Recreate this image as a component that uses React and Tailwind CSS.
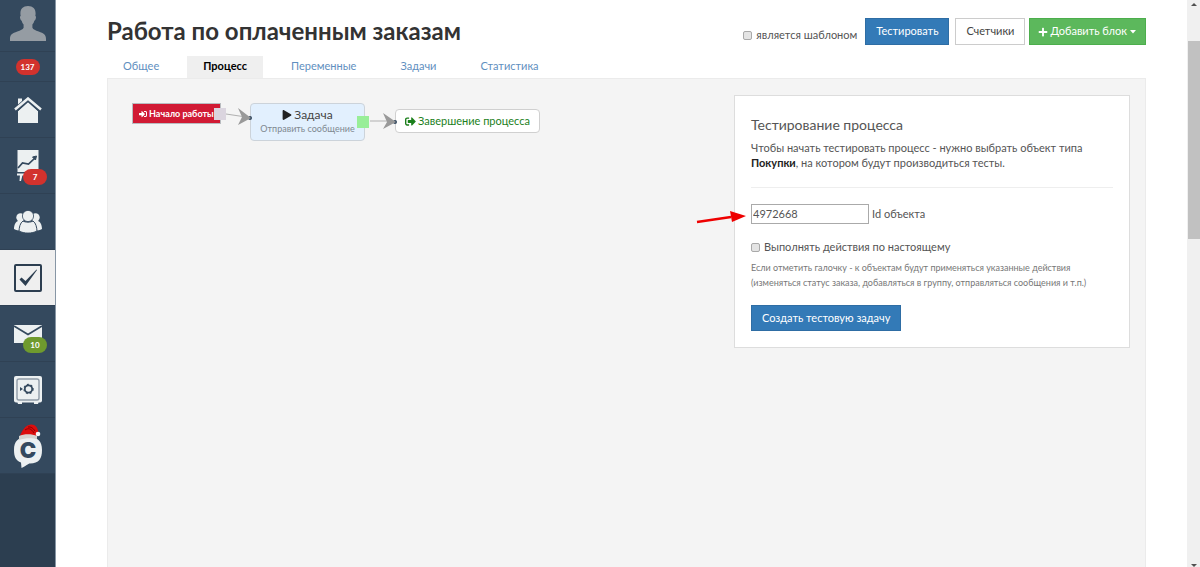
import React, { useState } from 'react';
import { FaPlay, FaPlus, FaSignInAlt, FaSignOutAlt } from 'react-icons/fa';

const UserIcon = () => (
  <svg width="36" height="36" viewBox="0 0 36 36" fill="#959ca3" aria-hidden="true">
    <path d="M18 0c5 0 7.600 2.800 7.600 7.500 0 .9-.1 1.700-.3 2.400.9.200 .8 1.600.4 2.900-.3 1-.7 1.700-1.400 1.900-.4 1.700-1.100 2.900-1.900 3.800v3.200c.8 1.700 3 2.600 6.300 3.800 5 1.800 7.300 3 7.300 7.500v2H0v-2c0-4.500 2.300-5.700 7.300-7.500 3.300-1.200 5.500-2.100 6.300-3.800v-3.200c-.8-.9-1.500-2.100-1.900-3.800-.7-.2-1.100-.9-1.400-1.900-.4-1.300-.5-2.700.4-2.900-.2-.7-.3-1.500-.3-2.400C10.400 2.800 13 0 18 0z" />
  </svg>
);

const HomeIcon = () => (
  <svg width="28" height="26" viewBox="0 0 28 26" aria-hidden="true">
    <path d="M4 1.500h4v4L4 9z" fill="#ecf0f1" />
    <path d="M4 14L14 5l10 9v12H4z" fill="#ecf0f1" />
    <path d="M1 13.500L14 2l13 11.500" fill="none" stroke="#34495e" strokeWidth="5" />
    <path d="M1 12.500L14 1.500l13 11" fill="none" stroke="#ecf0f1" strokeWidth="2.500" />
  </svg>
);

const ChartIcon = () => (
  <svg width="28" height="32" viewBox="0 0 28 32" aria-hidden="true">
    <path d="M3.500 0h21v22h-21zM3 23.500h22v2H3zM6 25h2.500L7 31H5.500z" fill="#ecf0f1" />
    <path d="M4 18l4.500-5 6 1 6.500-6" fill="none" stroke="#34495e" strokeWidth="1.700" />
    <path d="M22.500 6l-1 4-3-3z" fill="#34495e" stroke="#34495e" />
  </svg>
);

const UsersIcon = () => (
  <svg width="28" height="24" viewBox="0 0 28 24" fill="#ecf0f1" aria-hidden="true">
    <circle cx="6.500" cy="7.500" r="4.200" />
    <circle cx="21.500" cy="7.500" r="4.200" />
    <path d="M4 11C1 12 0 16 0 19c2 1.500 4 1.500 7 1.500L9 10zM24 11c3 1 4 5 4 8-2 1.500-4 1.500-7 1.500L19 10z" />
    <path d="M9 11c1.500 1.500 8.500 1.500 10 0 3 2 3.800 6.500 4 10-5 2.800-13 2.800-18 0 .2-3.500 1-8 4-10z" stroke="#34495e" strokeWidth="1" />
    <circle cx="14" cy="6" r="5.600" stroke="#34495e" strokeWidth=".8" />
  </svg>
);

const TaskIcon = () => (
  <svg width="28" height="28" viewBox="0 0 28 28" aria-hidden="true">
    <rect x="1" y="1" width="26" height="26" rx="1" fill="none" stroke="#2c3e50" strokeWidth="2" />
    <path d="M5.500 15.500l2-2 4 3.500L22.500 5.500 23 6 11.500 22z" fill="#2c3e50" />
  </svg>
);

const MailIcon = () => (
  <svg width="28" height="18" viewBox="0 0 28 18" aria-hidden="true">
    <path d="M0 0h28v18H0z" fill="#ecf0f1" />
    <path d="M0 1l14 8.500L28 1" fill="none" stroke="#34495e" strokeWidth="1.800" />
  </svg>
);

const SafeIcon = () => (
  <svg width="28" height="28" viewBox="0 0 28 28" aria-hidden="true">
    <path d="M3 25h5v3H4zM20 25h5l-1 3h-4z" fill="#ecf0f1" />
    <rect width="28" height="26.500" rx="2" fill="#ecf0f1" />
    <rect x="3" y="3" width="22" height="21" rx="2" fill="none" stroke="#8f9ba7" strokeWidth="1.400" />
    <circle cx="14.500" cy="13" r="3.700" fill="none" stroke="#34495e" strokeWidth="1.800" />
    <circle cx="14.500" cy="13" r="4.600" fill="none" stroke="#34495e" strokeWidth="1.200" strokeDasharray="1.900 2" />
    <path d="M6 11l3 2-3 2z" fill="#34495e" />
  </svg>
);

const ChatiumIcon = () => (
  <svg width="28" height="44" viewBox="0 0 28 44" aria-hidden="true">
    <path d="M14 13c10 0 14 4 14 13s-3 13-12 13.500c-2 0-4 2.500-8.500 4.500L7 38.500C2 36.500 0 33 0 26c0-9 4-13 14-13z" fill="#ecf0f1" />
    <text x="14" y="34" textAnchor="middle" fontFamily="Inter, sans-serif" fontWeight="900" fontSize="22" fill="#34495e">C</text>
    <path d="M5.500 13C8 7 11 1 17 .5c4-.3 7 3 7.500 8.500l-2.500 1 1 3z" fill="#dc0d0d" />
    <path d="M11 6c3-2 6-2 9 3M14 3c3-.5 5 1 7 4" fill="none" stroke="#8d0000" strokeWidth="1" />
    <path d="M5 12c5-2.500 13-2.500 18 0v3c-5-1-13-1-18 1z" fill="#d6d3d0" />
    <circle cx="24" cy="10" r="2.300" fill="#f8f8f8" />
  </svg>
);

const menu = [
  { title: 'Главная', icon: HomeIcon },
  { title: 'Трафик', icon: ChartIcon, badge: '7', badgeColor: 'bg-[#d2322d]' },
  { title: 'Пользователи', icon: UsersIcon },
  { title: 'Задачи', icon: TaskIcon, active: true },
  { title: 'Сообщения', icon: MailIcon, badge: '10', badgeColor: 'bg-[#6f9a2e]' },
  { title: 'Продажи', icon: SafeIcon },
  { title: 'Чат', icon: ChatiumIcon },
];

const tabs = ['Общее', 'Процесс', 'Переменные', 'Задачи', 'Статистика'];

const checkboxClass =
  'size-[9px] shrink-0 appearance-none rounded-[2px] border border-[#a9a9a9] bg-[#e4e4e4] checked:bg-[#337ab7]';

const Sidebar = () => (
  <nav className="w-14 shrink-0 border-r border-[#8796a5] bg-[#2c3e50]">
    <a href="#profile" aria-label="Профиль" className="flex h-[52px] items-center justify-center border-b border-[#2f4154] bg-[#34495e] pb-1">
      <UserIcon />
    </a>
    <a href="#notifications" className="flex h-[30px] items-center justify-center border-b border-[#2f4154] bg-[#34495e]">
      <span className="flex h-4 w-6 items-center justify-center rounded-full bg-[#d2322d] text-[8px] font-bold text-white">137</span>
    </a>
    {menu.map(({ title, icon: Icon, badge, badgeColor, active }) => (
      <a
        key={title}
        href="#menu"
        aria-label={title}
        className={`relative flex h-14 items-center justify-center border-b border-[#2f4154] ${active ? 'bg-[#efefef]' : 'bg-[#34495e]'}`}
      >
        <Icon />
        {badge && (
          <span className={`absolute right-2 bottom-2 flex h-4 w-6 items-center justify-center rounded-full text-[8px] font-bold text-white ${badgeColor}`}>
            {badge}
          </span>
        )}
      </a>
    ))}
  </nav>
);

const Header = () => (
  <header className="flex items-start justify-between pt-[18px]">
    <h1 className="text-[24px] leading-[26px] font-bold text-[#333]">Работа по оплаченным заказам</h1>
    <div className="flex text-[11px]">
      <label className="mr-2 flex items-center gap-1 pt-2 text-[#555]">
        <input type="checkbox" className={checkboxClass} />
        является шаблоном
      </label>
      <button className="mr-1.5 h-[27px] border border-[#2e6da4] bg-[#337ab7] px-2.5 text-white">Тестировать</button>
      <button className="mr-1 h-[27px] border border-[#ccc] bg-white px-2.5 text-[#444]">Счетчики</button>
      <button className="flex h-[27px] items-center gap-0.5 border border-[#4cae4c] bg-[#5cb85c] px-2 text-white">
        <FaPlus size={10} />
        Добавить блок
        <svg width="8" height="4" viewBox="0 0 8 4" fill="currentColor" aria-hidden="true">
          <path d="M1 0h6L4 3.500z" />
        </svg>
      </button>
    </div>
  </header>
);

const ProcessGraph = () => (
  <div className="absolute top-0 left-0">
    <div className="absolute top-6 left-6 flex h-[21px] w-[89px] items-center gap-0.5 border border-[#b9bcc0] bg-[#d11a34] pl-1.5 text-[9px] font-bold whitespace-nowrap text-white">
      <FaSignInAlt size={8} />
      Начало работы
    </div>
    <div className="absolute top-6 left-[142px] w-[115px] rounded border border-[#ccd3da] bg-[#e2f0fe] py-1 text-center whitespace-nowrap">
      <div className="flex items-center justify-center gap-0.5 text-[12px] leading-[14px] text-[#444]">
        <FaPlay size={10} color="#222" />
        Задача
      </div>
      <div className="text-[9px] leading-[14px] text-[#808890]">Отправить сообщение</div>
    </div>
    <div className="absolute top-[30px] left-[287px] flex h-6 w-[145px] items-center justify-center gap-0.5 rounded border border-[#d0d0d0] bg-white text-[11px] whitespace-nowrap text-[#1b7f1b]">
      <FaSignOutAlt size={11} />
      Завершение процесса
    </div>
    <svg className="absolute top-0 left-0" width="440" height="70" viewBox="0 0 440 70" aria-hidden="true">
      <circle cx="142" cy="39" r="2" fill="#34495e" />
      <circle cx="287" cy="43" r="2" fill="#34495e" />
      <path d="M118 35l20 3M262 42h18" stroke="#b0b0b0" />
      <path d="M143 39l-13 7 4-8-4-9zM288 43l-13 7 4-7-4-9z" fill="#999" />
      <path d="M106 29h12v12h-12z" fill="#dbd5df" />
      <path d="M249 37h12v12h-12z" fill="#98ee98" />
    </svg>
  </div>
);

const TestPanel = () => {
  const [objectId, setObjectId] = useState('4972668');

  return (
    <section className="relative mt-4 mr-[15px] ml-auto w-[396px] border border-[#ddd] bg-white p-4 text-[11px] text-[#555]">
      <h2 className="mt-[5px] text-[14px] leading-4">Тестирование процесса</h2>
      <p className="mt-[7px] leading-[15px]">
        Чтобы начать тестировать процесс - нужно выбрать объект типа <b className="text-[#222]">Покупки</b>, на котором
        будут производиться тесты.
      </p>
      <hr className="mt-[17px] mb-4 border-[#eee]" />
      <div className="flex items-center gap-[3px]">
        <input
          id="object-id"
          type="text"
          value={objectId}
          onChange={(e) => setObjectId(e.target.value)}
          className="h-5 w-[118px] border border-[#aaa] bg-white px-px pb-0.5 text-[11px]"
        />
        <label htmlFor="object-id">Id объекта</label>
      </div>
      <label className="mt-[15px] flex items-center gap-1 leading-4">
        <input type="checkbox" className={checkboxClass} />
        Выполнять действия по настоящему
      </label>
      <p className="mt-[5px] text-[9px] leading-[15px] text-[#777]">
        Если отметить галочку - к объектам будут применяться указанные действия
        <br />
        (изменяться статус заказа, добавляться в группу, отправляться сообщения и т.п.)
      </p>
      <button className="mt-[15px] h-[26px] border border-[#2e6da4] bg-[#337ab7] px-2.5 text-white">
        Создать тестовую задачу
      </button>
      <svg className="absolute top-[113px] -left-[39px]" width="52" height="16" viewBox="0 0 52 16" aria-hidden="true">
        <path d="M1 13l34-5" stroke="#ee0000" strokeWidth="2.500" />
        <path d="M50 7L34 2l2 11z" fill="#ee0000" />
      </svg>
    </section>
  );
};

const Scrollbar = () => (
  <div className="flex w-[13px] shrink-0 flex-col justify-between bg-[#f0f0f0] pl-px" aria-hidden="true">
    <svg width="12" height="8" viewBox="0 0 12 8">
      <path d="M3 6l3-3 3 3z" fill="#505050" />
    </svg>
    <div className="flex-1 pt-[33px]">
      <div className="h-[38%] bg-[#c1c1c1]" />
    </div>
    <svg width="12" height="4" viewBox="0 0 12 4">
      <path d="M3 1h6L6 4z" fill="#505050" />
    </svg>
  </div>
);

const App = () => {
  const [activeTab, setActiveTab] = useState('Процесс');

  return (
    <div className="flex h-screen overflow-hidden bg-white font-['Lato','Roboto',sans-serif]">
      <Sidebar />
      <main className="flex min-w-0 flex-1 flex-col pr-[41px] pl-[51px]">
        <Header />
        <div className="mt-[11px] flex gap-3 text-[11px]">
          {tabs.map((tab) => (
            <button
              key={tab}
              onClick={() => setActiveTab(tab)}
              className={`h-[22px] px-4 pb-0.5 ${activeTab === tab ? 'bg-[#efefef] font-bold text-black' : 'text-[#5f8fc0]'}`}
            >
              {tab}
            </button>
          ))}
        </div>
        <div className="relative flex flex-1 items-start border border-b-0 border-[#ebebeb] bg-[#f4f4f4]">
          <ProcessGraph />
          <TestPanel />
        </div>
      </main>
      <Scrollbar />
    </div>
  );
};

export default App;
